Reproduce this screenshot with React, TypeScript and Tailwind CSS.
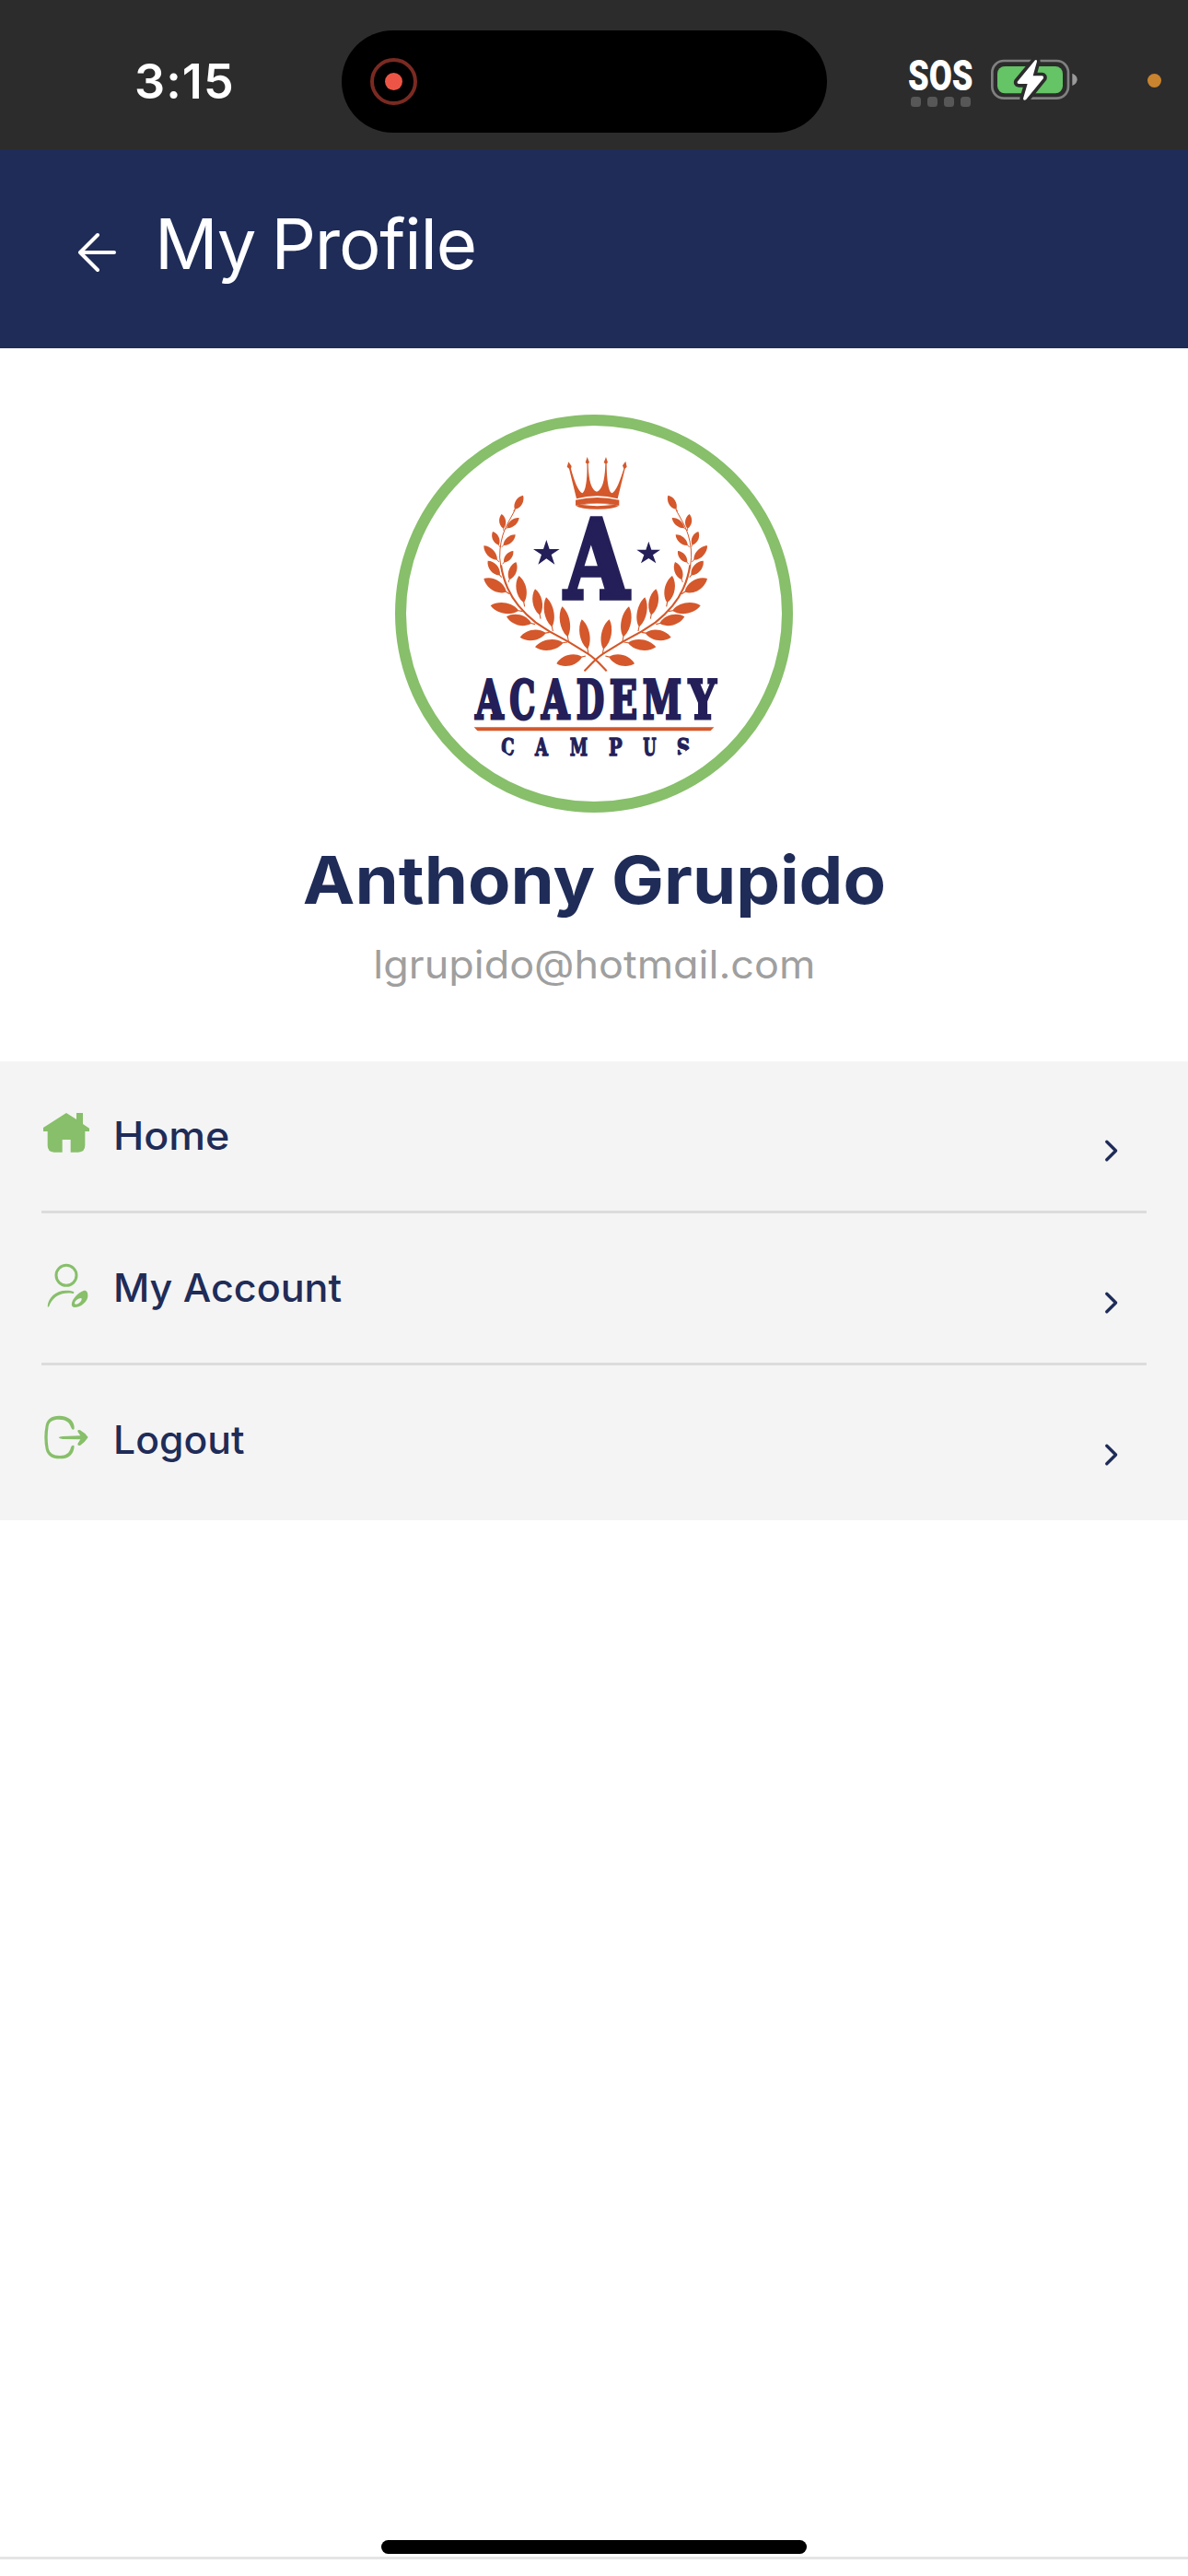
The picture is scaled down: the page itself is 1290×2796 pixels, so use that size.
import type { ReactNode } from "react";

const ORANGE = "#d4582b";
const INK = "#241f58";

/* tip x, tip y, base x, base y, width */
const LEAVES: [number, number, number, number, number][] = [
  [444, 293, 413, 345, 24],
  [374, 354, 381, 408, 22],
  [431, 366, 385, 404, 21],
  [345, 411, 368, 461, 22],
  [419, 421, 374, 461, 22],
  [316, 457, 366, 510, 26],
  [412, 474, 377, 517, 21],
  [329, 506, 374, 560, 28],
  [421, 510, 396, 576, 26],
  [316, 564, 400, 614, 37],
  [430, 555, 449, 655, 34],
  [338, 652, 443, 671, 36],
  [483, 598, 501, 695, 32],
  [390, 688, 483, 713, 35],
  [519, 625, 541, 735, 32],
  [434, 755, 530, 739, 35],
  [571, 655, 592, 768, 33],
  [483, 787, 588, 771, 36],
  [635, 697, 657, 808, 33],
  [553, 841, 648, 816, 36],
];

function leafPath([tx, ty, bx, by, w]: [number, number, number, number, number]) {
  const dx = bx - tx;
  const dy = by - ty;
  const len = Math.hypot(dx, dy);
  const nx = (-dy / len) * w;
  const ny = (dx / len) * w;
  const p = (t: number, k: number) => `${(tx + dx * t + nx * k).toFixed(1)} ${(ty + dy * t + ny * k).toFixed(1)}`;
  return `M${p(0, 0)}C${p(0.2, 0.58)} ${p(0.62, 0.68)} ${p(0.86, 0.05)}L${p(1, 0.05)}L${p(1, -0.05)}L${p(0.86, -0.05)}C${p(0.62, -0.68)} ${p(0.2, -0.58)} ${p(0, 0)}Z`;
}

function Branch() {
  return (
    <g>
      <path d="M716 865L690 838Q668 815 636 797L592 770L530 736L485 707Q420 655 394 596Q362 520 369 468Q374 420 394 384L418 340" fill="none" stroke={ORANGE} strokeWidth="3" />
      <path d="M716 865L690 838Q668 815 636 797L592 770L530 736L485 707Q420 655 394 596Q378 560 372 520" fill="none" stroke={ORANGE} strokeWidth="6.5" />
      {LEAVES.map((l) => (
        <path key={l.join()} d={leafPath(l)} fill={ORANGE} />
      ))}
    </g>
  );
}

/* letter, left x, advance width */
const ACADEMY: [string, number, number][] = [
  ["A", 289, 91],
  ["C", 400, 84],
  ["A", 504, 91],
  ["D", 617, 91],
  ["E", 725, 91],
  ["M", 833, 127],
  ["Y", 983, 90],
];
const CAMPUS: [string, number, number][] = [
  ["C", 373, 43],
  ["A", 483, 42],
  ["M", 596, 58],
  ["P", 723, 44],
  ["U", 835, 43],
  ["S", 944, 44],
];

function Letters({ set, y, size, stroke }: { set: [string, number, number][]; y: number; size: number; stroke: number }) {
  return (
    <g fill={INK} stroke={INK} strokeWidth={stroke} fontSize={size} className="font-['DejaVu_Serif',serif] font-bold">
      {set.map(([ch, x, w]) => (
        <text key={x} x={x} y={y} textLength={w} lengthAdjust="spacingAndGlyphs">
          {ch}
        </text>
      ))}
    </g>
  );
}

function AcademyLogo() {
  return (
    <svg viewBox="63 66 1224 1224" className="size-full" role="img" aria-label="Academy Campus">
      <clipPath id="disc">
        <circle cx="675" cy="680" r="537" />
      </clipPath>
      <g clipPath="url(#disc)">
        <Branch />
        <g transform="translate(1360 0) scale(-1 1)">
          <Branch />
        </g>
        <g fill={ORANGE}>
          <path d="M618 304L594 206L587 200L592 184L602 198L600 206C610 245 624 280 637 286C650 280 654 225 652 190L647 186L653 168L660 186L656 190C657 235 664 276 684 281C704 276 711 235 712 190L707 186L714 168L720 186L716 190C716 225 720 280 733 286C747 280 760 245 772 206L768 196L778 182L782 200L776 206L752 304Q685 286 618 304Z" />
          <path d="M615 308Q685 292 757 308V326Q685 310 615 326Z" />
          <path fillRule="evenodd" d="M615 326Q685 312 757 326Q740 338 686 338Q630 338 615 326ZM636 324Q685 331 736 324Q685 317 636 324Z" />
        </g>
        <g fill={INK}>
          <path d="M520 438L530 468H563L536 486L547 518L520 499L493 518L504 486L477 468H510Z" />
          <path d="M853 443L862 470H891L867 487L877 514L853 498L828 514L838 487L814 470H844Z" />
        </g>
        <Letters set={[["A", 579, 209]]} y={627} size={355} stroke={16} />
        <Letters set={ACADEMY} y={1021} size={172} stroke={9} />
        <path d="M282 1048H1069L1058 1060H292Z" fill={ORANGE} />
        <Letters set={CAMPUS} y={1140} size={78} stroke={4} />
      </g>
    </svg>
  );
}

function Battery() {
  const bolt = "M462 46L404 116Q402 122 408 123H437L423 171Q424 179 432 175L489 105Q491 98 484 97H455L468 50Q468 42 462 46Z";
  return (
    <svg viewBox="318 30 282 159" className="-mt-1 ml-[18px] h-[53px] w-[94px]">
      <rect x="322" y="48" width="248" height="122" rx="38" fill="none" stroke="#808080" strokeWidth="8" />
      <rect x="339" y="66" width="213" height="88" rx="24" fill="#65c466" />
      <path d="M583 89Q599 95 599 109Q599 123 583 129Z" fill="#9a9a9a" />
      <path d={bolt} fill="#2c2c2c" stroke="#2c2c2c" strokeWidth="22" strokeLinejoin="round" />
      <path d={bolt} fill="#fff" />
    </svg>
  );
}

function StatusBar() {
  return (
    <div className="flex h-[162px] items-center bg-[#2c2c2c] pt-[33px] pb-[18px] text-white">
      <div className="w-[371px] pl-[146px] text-[52px] leading-none font-semibold tracking-[1.1px]">3:15</div>
      <div className="flex h-[111px] w-[527px] items-center rounded-full bg-black pl-[31px]">
        <div className="flex size-[51px] items-center justify-center rounded-full border-[4px] border-[#7a2a22]">
          <div className="size-[19px] rounded-full bg-[#ec5545]" />
        </div>
      </div>
      <div className="-mt-[2px] ml-[88px] w-[72px]">
        <div className="origin-left scale-x-[0.79] font-['Roboto',sans-serif] text-[46px] leading-none font-black">SOS</div>
        <div className="flex gap-[7px] pl-[3px]">
          <i className="size-[11px] rounded-[3.5px] bg-[#575757]" />
          <i className="size-[11px] rounded-[3.5px] bg-[#575757]" />
          <i className="size-[11px] rounded-[3.5px] bg-[#575757]" />
          <i className="size-[11px] rounded-[3.5px] bg-[#575757]" />
        </div>
      </div>
      <Battery />
      <div className="-mt-[3px] ml-[76px] size-[15px] rounded-full bg-[#c8842f]" />
    </div>
  );
}

const homeIcon = (
  <svg viewBox="135 189 162 162" className="size-[54px]" fill="#87bf6a">
    <path d="M216 204L249 225V204H270V240L291 254V264H277V310Q277 332 255 332H230V291H203V332H176Q155 332 155 310V264H141V252Z" />
  </svg>
);

const accountIcon = (
  <svg viewBox="15 24 162 162" className="size-[54px]" fill="#87bf6a">
    <circle cx="96" cy="73" r="33" fill="none" stroke="#87bf6a" strokeWidth="9" />
    <path d="M35 175C36 145 62 122 96 122C106 122 114 123 120 126C122 129 121 133 117 132C85 127 56 138 42 168C40 175 38 177 35 175Z" />
    <path fillRule="evenodd" d="M152 123C161 120 167 128 166 141C165 158 145 177 122 177C115 177 112 171 114 163C118 147 134 130 152 123ZM145 147C137 146 124 155 123 163C123 169 130 168 136 164C143 160 148 152 145 147Z" />
  </svg>
);

const logoutIcon = (
  <svg viewBox="135 399 162 162" className="size-[54px]" fill="#87bf6a">
    <path d="M242 452C244 426 222 410 193 410C167 410 153 421 149 441Q141 480 149 519C154 540 168 550 195 550C222 550 240 538 242 509C238 504 234 507 231 513C226 532 215 540 195 540C173 540 162 532 158 516Q152 480 158 443C162 428 172 422 192 422C214 422 226 431 231 447C234 454 238 458 242 452Z" />
    <path d="M191 481Q193 478 204 477L262 475L253 461Q252 453 261 457Q277 466 287 480Q277 496 262 506Q252 509 253 501L262 487L204 486Q193 485 191 481Z" />
  </svg>
);

function MenuRow({ icon, label }: { icon: ReactNode; label: ReactNode }) {
  return (
    <div className="box-content flex h-[162px] items-center">
      <div className="h-[60px]">{icon}</div>
      <div className="ml-6 flex-1 text-[42px] leading-none font-medium text-[#1f2c58]">{label}</div>
      <svg viewBox="0 0 16 26" className="mt-[31px] mr-[30px] h-[26px] w-4" fill="none" stroke="#1f2c58" strokeWidth="3.4" strokeLinecap="round" strokeLinejoin="round">
        <path d="M2.8 3.3L12.6 13L2.8 22.7" />
      </svg>
    </div>
  );
}

export default function App() {
  return (
    <div className="flex h-[2796px] w-[1290px] flex-col overflow-hidden bg-white font-['Inter',sans-serif] [font-feature-settings:'cv11']">
      <StatusBar />

      <header className="flex h-[216px] items-center bg-[#1f2c58] pl-[84px] text-white">
        <svg viewBox="0 0 42 44" className="mt-[8px] h-[44px] w-[42px]" fill="none" stroke="#fff" strokeWidth="4" strokeLinecap="round" strokeLinejoin="round">
          <path d="M22 3L3 22L22 41M3 22H40" />
        </svg>
        <h1 className="-mt-[13px] ml-[42px] text-[76px] leading-none tracking-[-1.2px] [word-spacing:-3px]">My Profile</h1>
      </header>

      <section className="flex h-[774px] flex-col items-center pt-[72px]">
        <div className="size-[432px] rounded-full border-[12px] border-[#87bf6a]">
          <AcademyLogo />
        </div>
        <h2 className="mt-[37px] scale-x-[1.054] text-[72px] leading-[72px] font-bold text-[#1f2c58]">Anthony Grupido</h2>
        <p className="mt-[35px] scale-x-[1.07] text-[42px] leading-[42px] text-[#9f9f9f]">lgrupido@hotmail.com</p>
      </section>

      <nav className="divide-y-[3px] divide-[#dcdcdc] bg-[#f4f4f4] px-[45px] pb-[6px]">
        <MenuRow icon={homeIcon} label={<span className="inline-block origin-left scale-x-[1.065]">Home</span>} />
        <MenuRow icon={accountIcon} label={<span className="inline-block origin-left scale-x-[1.025]">My Account</span>} />
        <MenuRow icon={logoutIcon} label={<span className="inline-block origin-left scale-x-[1.017]">Logout</span>} />
      </nav>

      <footer className="mt-auto flex flex-col items-center pb-[18px]">
        <div className="h-[15px] w-[462px] rounded-full bg-black" />
        <div className="mt-[3px] h-[3px] w-full bg-[#e5e5e5]" />
      </footer>
    </div>
  );
}
